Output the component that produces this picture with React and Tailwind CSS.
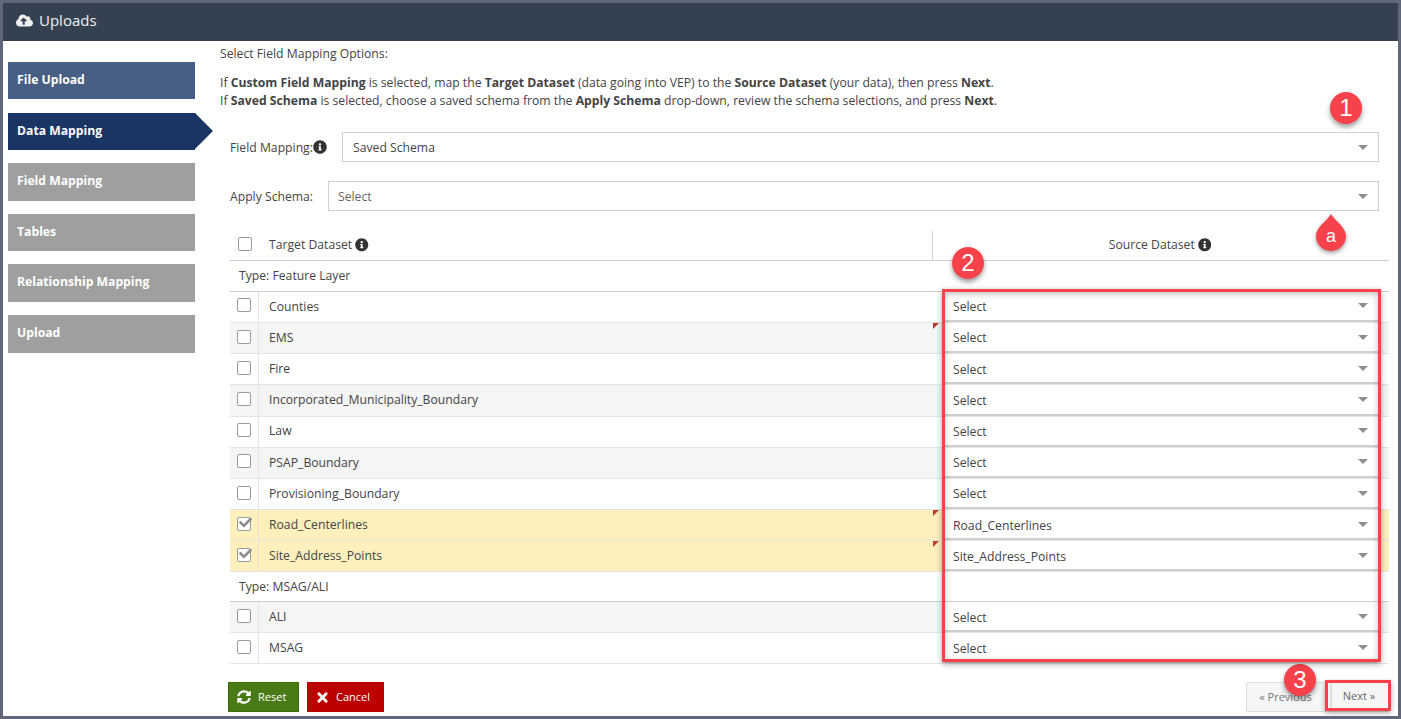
import { FaCloudUploadAlt, FaInfoCircle, FaSyncAlt, FaTimes, FaCheck } from "react-icons/fa";

const tabs = [
  { label: "File Upload", bg: "bg-[#475e85]", h: "h-[37px]", mb: "mb-[14px]" },
  { label: "Data Mapping", bg: "bg-[#1a3463]", h: "h-[37px]", mb: "mb-[13px]", active: true },
  { label: "Field Mapping", bg: "bg-[#9f9f9f]", h: "h-[38px]", mb: "mb-[13px]" },
  { label: "Tables", bg: "bg-[#9f9f9f]", h: "h-[37px]", mb: "mb-[13px]" },
  { label: "Relationship Mapping", bg: "bg-[#9f9f9f]", h: "h-[38px]", mb: "mb-[13px]" },
  { label: "Upload", bg: "bg-[#9f9f9f]", h: "h-[38px]", mb: "" },
];

const rows = [
  { type: "group", name: "Type: Feature Layer", h: "h-[30.8px]" },
  { name: "Counties" },
  { name: "EMS", bg: "bg-[#f5f5f5]", flag: true },
  { name: "Fire" },
  { name: "Incorporated_Municipality_Boundary", bg: "bg-[#f5f5f5]" },
  { name: "Law" },
  { name: "PSAP_Boundary", bg: "bg-[#f5f5f5]" },
  { name: "Provisioning_Boundary" },
  { name: "Road_Centerlines", bg: "bg-[#fdf0bd]", checked: true, value: "Road_Centerlines", flag: true },
  { name: "Site_Address_Points", bg: "bg-[#fdf0bd]", checked: true, value: "Site_Address_Points", flag: true },
  { type: "group", name: "Type: MSAG/ALI", h: "h-[29.6px]" },
  { name: "ALI", bg: "bg-[#f5f5f5]" },
  { name: "MSAG" },
];

function Caret() {
  return <span className="w-0 h-0 border-x-[5px] border-x-transparent border-t-[5px] border-t-[#8f8f8f]" />;
}

function Checkbox({ checked }) {
  return (
    <span className="relative block w-[14px] h-[14px] rounded-[2px] border border-[#9a9a9a] bg-white">
      {checked && <FaCheck className="absolute left-[1px] -top-[2px] text-[#8d8d8d] text-[13px]" />}
    </span>
  );
}

function Select({ value, className }) {
  return (
    <div className={`flex items-center justify-between bg-white border border-[#cfcfcf] ${className}`}>
      <span className="pt-[2px]">{value}</span>
      <Caret />
    </div>
  );
}

function Badge({ className, children }) {
  return (
    <div className={`absolute flex items-center justify-center w-[32px] h-[32px] rounded-full bg-[#f8424b] text-white text-[24px] shadow-[0_3px_5px_rgba(0,0,0,0.4)] font-['Liberation_Sans',sans-serif] ${className}`}>
      {children}
    </div>
  );
}

export default function App() {
  return (
    <div className="relative w-[1401px] h-[719px] overflow-hidden border-[3px] border-[#5f6778] bg-white text-[#444] font-['Open_Sans',sans-serif]">
      <div className="flex items-center gap-[6px] h-[38px] pl-[13px] pb-[3px] bg-[#334150] text-[#f1f1f1] text-[15px]">
        <FaCloudUploadAlt className="text-[17px]" />
        <span>Uploads</span>
      </div>

      <div className="flex">
        <div className="w-[217px] shrink-0 pt-[21px] pl-[5px]">
          {tabs.map((tab) => (
            <div key={tab.label} className={`relative flex items-center w-[187px] pl-[9px] pb-[1px] text-white text-[12.2px] font-bold ${tab.bg} ${tab.h} ${tab.mb}`}>
              {tab.label}
              {tab.active && (
                <span className="absolute left-full top-0 w-0 h-0 border-y-[18.5px] border-y-transparent border-l-[18px] border-l-[#1a3463]" />
              )}
            </div>
          ))}
        </div>

        <div className="flex-1 min-w-0 text-[12.2px]">
          <p className="mt-[4px] leading-[18px]">Select Field Mapping Options:</p>
          <p className="mt-[11px] leading-[18px]">
            If <b>Custom Field Mapping</b> is selected, map the <b>Target Dataset</b> (data going into VEP) to the <b>Source Dataset</b> (your data), then press <b>Next</b>.
          </p>
          <p className="leading-[18px]">
            If <b>Saved Schema</b> is selected, choose a saved schema from the <b>Apply Schema</b> drop-down, review the schema selections, and press <b>Next</b>.
          </p>

          <div className="flex items-center mt-[22px] pl-[10px] pr-[19px]">
            <span className="flex items-center w-[112px]">
              <span className="pt-[2px]">Field Mapping:</span>
              <FaInfoCircle className="text-[14px] text-[#333]" />
            </span>
            <Select value="Saved Schema" className="flex-1 h-[30px] pl-[10px] pr-[10px]" />
          </div>
          <div className="flex items-center mt-[19px] pl-[10px] pr-[19px]">
            <span className="w-[98px] pt-[2px]">Apply Schema:</span>
            <Select value="Select" className="flex-1 h-[30px] pl-[9px] pr-[10px] text-[#666]" />
          </div>

          <div className="ml-[10px] w-[1159px] mt-[20px]">
            <div className="flex h-[30px] border-b border-[#cfcfcf]">
              <div className="flex items-center justify-center w-[29px] pb-[4px]">
                <Checkbox />
              </div>
              <div className="flex items-center gap-[3px] w-[674px] pl-[10px] pb-[1px] border-r border-[#cfcfcf]">
                Target Dataset
                <FaInfoCircle className="text-[13.5px] text-[#333]" />
              </div>
              <div className="flex-1 flex items-center justify-center gap-[3px] pb-[1px] pr-[2px]">
                Source Dataset
                <FaInfoCircle className="text-[13.5px] text-[#333]" />
              </div>
            </div>

            {rows.map((row) =>
              row.type === "group" ? (
                <div key={row.name} className={`flex items-center pl-[9px] border-b border-[#cfcfcf] ${row.h}`}>
                  {row.name}
                </div>
              ) : (
                <div key={row.name} className={`flex h-[31.2px] border-b border-[#e4e4e4] ${row.bg || "bg-white"}`}>
                  <div className="flex items-center justify-center w-[29px] pb-[3px] border-r border-[#e4e4e4]">
                    <Checkbox checked={row.checked} />
                  </div>
                  <div className="flex items-center w-[674px] pl-[10px]">
                    {row.name}
                  </div>
                  <div className="relative flex-1 pl-[10px] pr-[11px]">
                    {row.flag && (
                      <span className="absolute left-0 top-0 w-0 h-0 border-t-[6px] border-t-[#c0392b] border-r-[6px] border-r-transparent" />
                    )}
                    <div className="flex items-center justify-between h-full pl-[10px] pr-[10px] bg-white border-b-2 border-[#cfcfcf]">
                      <span className="pt-[3px]">{row.value || "Select"}</span>
                      <Caret />
                    </div>
                  </div>
                </div>
              )
            )}
          </div>

          <div className="flex items-center justify-between ml-[8px] w-[1161px] mt-[17.6px]">
            <div className="flex gap-[8px]">
              <button className="flex items-center gap-[7px] h-[30px] w-[71px] pl-[8px] bg-[#4a7a15] border border-[#3b6a0c] text-white text-[11px]">
                <FaSyncAlt className="text-[14px]" />
                Reset
              </button>
              <button className="flex items-center gap-[6px] h-[30px] w-[77px] pl-[8px] bg-[#bd0000] text-white text-[11px]">
                <FaTimes className="text-[15px]" />
                Cancel
              </button>
            </div>
            <div className="flex">
              <button className="h-[30px] w-[85px] pr-[6px] bg-[#f6f6f6] border border-[#dedede] text-[#777] text-[11px]">« Previous</button>
              <button className="h-[30px] w-[58px] pb-[1px] pr-[2px] bg-[#f6f6f6] border border-[#dedede] text-[#666] text-[11px]">Next »</button>
            </div>
          </div>
        </div>
      </div>

      <Badge className="left-[1327px] top-[89px]">1</Badge>
      <Badge className="left-[949px] top-[244px]">2</Badge>
      <Badge className="left-[1281px] top-[661px]">3</Badge>

      <svg className="absolute left-[1313px] top-[211px] overflow-visible drop-shadow-[0_2px_2px_rgba(0,0,0,0.4)]" width="30" height="37" viewBox="0 0 30 37">
        <path d="M15 0 C19 7 30 13 30 22 A15 15 0 0 1 0 22 C0 13 11 7 15 0 Z" fill="#f8424b" />
      </svg>
      <span className="absolute left-[1323px] top-[223px] text-white text-[18px] leading-[20px] font-['Liberation_Sans',sans-serif]">a</span>

      <div className="absolute left-[939px] top-[286px] w-[439px] h-[373px] border-[3px] border-[#f8424b] shadow-[0_2px_6px_rgba(0,0,0,0.35),inset_0_2px_6px_rgba(0,0,0,0.25)]" />
      <div className="absolute left-[1322px] top-[677px] w-[66px] h-[31px] border-[3px] border-[#f8424b] shadow-[0_2px_5px_rgba(0,0,0,0.35)]" />
    </div>
  );
}
